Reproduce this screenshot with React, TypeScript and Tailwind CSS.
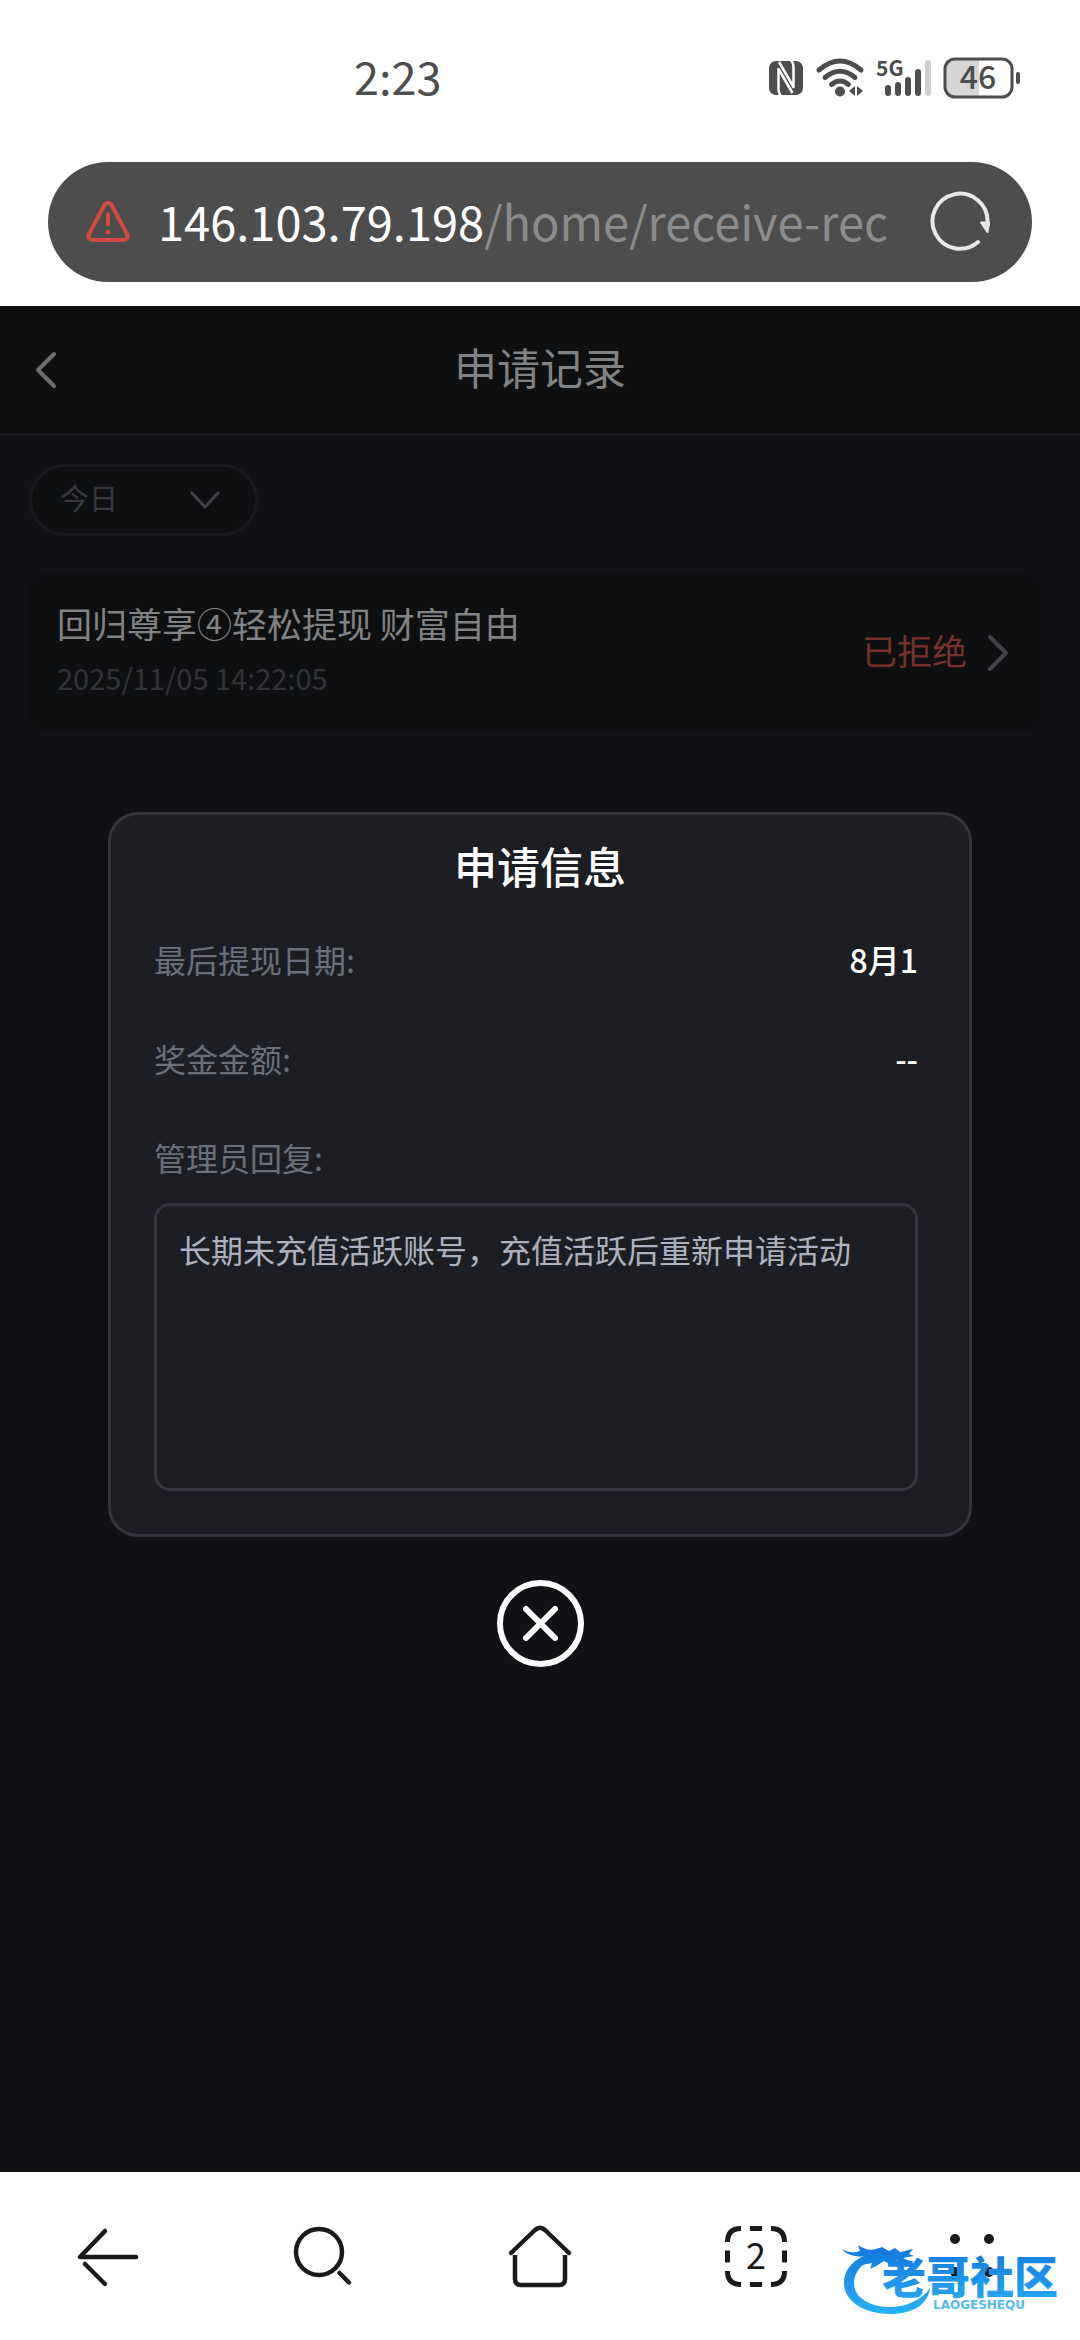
import React from "react";

const font = "font-['Noto_Sans_CJK_SC',sans-serif]";

function StatusBar() {
  return (
    <div className="flex h-[162px] items-start justify-between pl-[354px] pr-[58px] pt-[44px] text-[#4d4d4d]">
      <time className="text-[45px] leading-[64px]">2:23</time>
      <div className="flex items-start pt-[12px]">
        <svg width="36" height="44" viewBox="0 0 36 44" aria-label="NFC">
          <rect x="1" y="5" width="34" height="34" rx="7" fill="#4d4d4d" />
          <path d="M13 39.500 Q10.500 38 10.500 32 V13 L24.500 37" fill="none" stroke="#fff" strokeWidth="2.500" strokeLinejoin="round" />
          <path d="M22.500 4.500 Q25.500 6 25.500 12 V31 L11 6" fill="none" stroke="#fff" strokeWidth="2.500" strokeLinejoin="round" />
        </svg>
        <svg className="ml-[12px]" width="50" height="44" viewBox="0 0 50 44" aria-label="Wi-Fi">
          <g fill="none" stroke="#4d4d4d" strokeWidth="5" strokeLinecap="round">
            <path d="M3 14 Q24 -4 45 14" />
            <path d="M9 21.500 Q24 9 39 21.500" />
            <path d="M15.500 28.500 Q24 21.500 32.500 28.500" />
          </g>
          <circle cx="24" cy="35.500" r="5" fill="#4d4d4d" />
          <path d="M39 30 V40 L33 35 Z M41 30 V40 L47 35 Z" fill="#4d4d4d" />
        </svg>
        <svg className="ml-[10px] overflow-visible" width="58" height="44" viewBox="0 0 58 44" aria-label="5G">
          <text x="0" y="20" fontSize="21" fontWeight="700" fontFamily="Noto Sans CJK SC" fill="#4d4d4d">5G</text>
          <g stroke="#4d4d4d" strokeWidth="6" strokeLinecap="round">
            <path d="M12 32 V37" />
            <path d="M22 29 V37" />
            <path d="M32 24 V37" />
            <path d="M42 16 V37" />
            <path d="M52 7 V37" stroke="#cfcfcf" />
          </g>
        </svg>
        <svg className="ml-[9px] overflow-visible" width="79" height="44" viewBox="0 0 79 44" aria-label="Battery">
          <path d="M12 4 H36 V40 H12 Q3 40 3 31 V13 Q3 4 12 4" fill="#d6d6d6" />
          <rect x="2" y="3" width="67" height="38" rx="10" fill="none" stroke="#4d4d4d" strokeWidth="3" />
          <path d="M75 18 V26" stroke="#4d4d4d" strokeWidth="4" strokeLinecap="round" />
          <text x="35" y="33" textAnchor="middle" fontSize="32" fontWeight="500" fontFamily="Noto Sans CJK SC" fill="#4d4d4d">46</text>
        </svg>
      </div>
    </div>
  );
}

function AddressBar() {
  return (
    <div className="px-[48px] pb-[24px]">
      <div className="flex h-[120px] items-center rounded-full bg-[#4d4d4d] pl-[38px] pr-[40px]">
        <svg className="shrink-0" width="44" height="42" viewBox="0 0 44 42" fill="none" stroke="#d64a40" strokeWidth="4" strokeLinecap="round" strokeLinejoin="round" aria-hidden="true">
          <path d="M18.500 4 Q22 -0.500 25.500 4 L41 33 Q43 38.500 37.500 39 H6.500 Q1 38.500 3 33 Z" />
          <path d="M22 13.500 V23.500" />
          <path d="M22 31 V31.200" strokeWidth="4.500" />
        </svg>
        <button type="button" aria-label="Address" className="ml-[28px] flex-1 overflow-hidden whitespace-nowrap pb-[2px] text-left text-[47px] leading-[72px] text-white">
          146.103.79.198<span className="text-[#8c8c8c]">/home/receive-rec</span>
        </button>
        <button type="button" aria-label="Reload" className="shrink-0">
          <svg width="64" height="64" viewBox="0 0 64 64" fill="none">
            <path d="M50 52 A27.500 27.500 0 1 1 59.500 32 V36" stroke="#e8e8e8" strokeWidth="4" strokeLinecap="round" />
            <path d="M53 32.500 H61 L59.500 42 Z" fill="#e8e8e8" stroke="#e8e8e8" strokeWidth="2" strokeLinejoin="round" />
          </svg>
        </button>
      </div>
    </div>
  );
}

function PageHeader() {
  return (
    <header className="grid h-[130px] grid-cols-[1fr_auto_1fr] items-center border-b-[3px] border-[#18191d] bg-[#0e0f10] px-[34px]">
      <button type="button" aria-label="返回" className="justify-self-start">
        <svg width="24" height="40" viewBox="0 0 24 40" fill="none" stroke="#6e6e70" strokeWidth="4" strokeLinecap="round" strokeLinejoin="round">
          <path d="M20 4 L4 20 L20 36" />
        </svg>
      </button>
      <h1 className="pb-[8px] text-[43px] leading-[60px] text-[#818283]">申请记录</h1>
      <span />
    </header>
  );
}

function RecordList() {
  return (
    <div className="pl-[29px] pr-[38px] pt-[28px]">
      <div className="relative w-[229px]">
        <select aria-label="日期" className="block h-[72px] w-full appearance-none rounded-full border-[3px] border-[#18191d] bg-[#0e0f10] pb-[6px] pl-[28px] text-[29px] leading-[40px] text-[#38393d]">
          <option>今日</option>
        </select>
        <svg className="pointer-events-none absolute right-[36px] top-[24px]" width="34" height="24" viewBox="0 0 34 24" fill="none" stroke="#424346" strokeWidth="3" strokeLinecap="round" strokeLinejoin="round" aria-hidden="true">
          <path d="M4 5 L17 19 L30 5" />
        </svg>
      </div>
      <button type="button" className="mt-[37px] flex h-[160px] w-full items-center justify-between rounded-[20px] bg-[#0e0f10] pl-[28px] pr-[32px] text-left">
        <span className="flex flex-col gap-1 pb-[6px]">
          <span className="text-[35px] leading-[50px] text-[#818283]">回归尊享④轻松提现 财富自由</span>
          <span className="text-[29px] leading-[50px] text-[#313338]">2025/11/05 14:22:05</span>
        </span>
        <span className="flex items-center gap-[19px]">
          <span className="pb-[6px] text-[35px] leading-[50px] text-[#76312c]">已拒绝</span>
          <svg width="24" height="40" viewBox="0 0 24 40" fill="none" stroke="#424346" strokeWidth="4" strokeLinecap="round" strokeLinejoin="round" aria-hidden="true">
            <path d="M4 4 L20 20 L4 36" />
          </svg>
        </span>
      </button>
    </div>
  );
}

function InfoRow({ label, value }: { label: string; value: string }) {
  return (
    <div className="flex justify-between leading-[46px]">
      <dt className="text-[#6b6f7a]">{label}</dt>
      <dd className="font-medium text-white">{value}</dd>
    </div>
  );
}

function InfoDialog() {
  return (
    <div className="absolute inset-0 flex flex-col items-center justify-center gap-[43px]">
      <section role="dialog" aria-labelledby="info-title" className="w-4/5 rounded-[30px] border-[3px] border-[#34353d] bg-[#1d1e23] pb-[43px] text-[32px]">
        <h2 id="info-title" className="text-center text-[43px] font-medium leading-[100px] text-white">申请信息</h2>
        <div className="pl-[43px] pr-[51px]">
          <dl className="mt-[21px] flex flex-col gap-[53px]">
            <InfoRow label="最后提现日期:" value="8月1" />
            <InfoRow label="奖金金额:" value="--" />
          </dl>
          <label htmlFor="reply" className="mt-[53px] block leading-[46px] text-[#6b6f7a]">管理员回复:</label>
          <textarea
            id="reply"
            readOnly
            defaultValue="长期未充值活跃账号，充值活跃后重新申请活动"
            className="mt-[23px] block h-[288px] w-full resize-none rounded-[16px] border-[3px] border-[#34353d] bg-transparent px-[22px] py-[20px] leading-[46px] text-[#adb1bf]"
          />
        </div>
      </section>
      <button type="button" aria-label="关闭">
        <svg width="87" height="87" viewBox="0 0 87 87" fill="none" stroke="#fff" strokeLinecap="round">
          <circle cx="43.500" cy="43.500" r="40.500" strokeWidth="6" />
          <path d="M29 29 L58 58 M58 29 L29 58" strokeWidth="6" />
        </svg>
      </button>
    </div>
  );
}

const navIcon = "mx-auto h-[64px] w-[64px]";

function BottomNav() {
  return (
    <nav className="relative grid h-[168px] grid-cols-5 items-center bg-white">
      <button type="button" aria-label="后退">
        <svg className={navIcon} viewBox="0 0 64 64" fill="none" stroke="#1a1a1a" strokeWidth="4.500" strokeLinecap="round">
          <path d="M29 7 L4 33 H60" strokeLinejoin="round" />
          <path d="M9 40 L29 60" />
        </svg>
      </button>
      <button type="button" aria-label="搜索">
        <svg className={navIcon} viewBox="0 0 64 64" fill="none" stroke="#1a1a1a" strokeWidth="4.500" strokeLinecap="round">
          <circle cx="27" cy="28" r="23" />
          <path d="M47.500 49 L57 58.500" />
        </svg>
      </button>
      <button type="button" aria-label="主页">
        <svg className={navIcon} viewBox="0 0 64 64" fill="none" stroke="#1a1a1a" strokeWidth="4.500" strokeLinejoin="round">
          <path d="M3 29 L27 6 Q32 1.500 37 6 L61 29" strokeLinecap="round" />
          <path d="M7 31 V55 Q7 61 13 61 H51 Q57 61 57 55 V31" />
        </svg>
      </button>
      <button type="button" aria-label="标签页">
        <svg className={navIcon} viewBox="0 0 64 64" fill="none" stroke="#1a1a1a" strokeWidth="5">
          <path d="M3.500 18 Q3.500 4.500 17 4.500 M47 4.500 Q60.500 4.500 60.500 18 M60.500 47 Q60.500 60.500 47 60.500 M17 60.500 Q3.500 60.500 3.500 47" />
          <path d="M26 4.500 H38 M26 60.500 H38 M3.500 26.500 V38.500 M60.500 26.500 V38.500" />
          <text x="32" y="45" textAnchor="middle" fontSize="36" fontFamily="Noto Sans CJK SC" fill="#1a1a1a" stroke="none">2</text>
        </svg>
      </button>
      <button type="button" aria-label="更多">
        <svg className={navIcon} viewBox="0 0 64 64" fill="#1a1a1a">
          <circle cx="15" cy="15" r="5" />
          <circle cx="49" cy="15" r="5" />
          <circle cx="15" cy="48" r="5" />
          <circle cx="49" cy="48" r="5" />
        </svg>
      </button>
      <svg className="pointer-events-none absolute bottom-[20px] right-[10px]" width="230" height="80" viewBox="0 0 230 80" aria-label="老哥社区">
        <defs>
          <linearGradient id="brand" x1="0" y1="0" x2="0" y2="80" gradientUnits="userSpaceOnUse">
            <stop offset="0.100" stopColor="#1479dc" />
            <stop offset="0.900" stopColor="#27b0f6" />
          </linearGradient>
        </defs>
        <g fill="url(#brand)">
          <path d="M36 13 C18 15 4 27 4 43 C4 61 24 74 50 74 C72 74 88 65 90 48 C82 60 66 67 50 67 C32 67 14 59 14 43 C14 32 22 23 34 19 Z" />
          <path d="M2 9 C9 13 14 13 20 11 L18 5 C24 9 30 11 36 9 L42 7 L49 11 L55 8 L60 12 L73 9 L69 14 L74 16 L62 18 L71 21 L69 23 L58 20 L50 24 L44 21 L38 25 L30 29 L32 23 L22 25 L28 16 C16 18 7 15 2 9 Z" />
          <text x="42" y="54" fontSize="44" fontWeight="900" fontFamily="Noto Sans CJK SC">老哥社区</text>
          <text x="93" y="69" fontSize="12" fontFamily="DejaVu Sans" fontWeight="700" opacity="0.800">LAOGESHEQU</text>
        </g>
      </svg>
    </nav>
  );
}

export default function App() {
  return (
    <div className={`flex min-h-screen flex-col bg-white ${font}`}>
      <StatusBar />
      <AddressBar />
      <main className="relative flex-1 bg-[#101115]">
        <PageHeader />
        <RecordList />
        <InfoDialog />
      </main>
      <BottomNav />
    </div>
  );
}
